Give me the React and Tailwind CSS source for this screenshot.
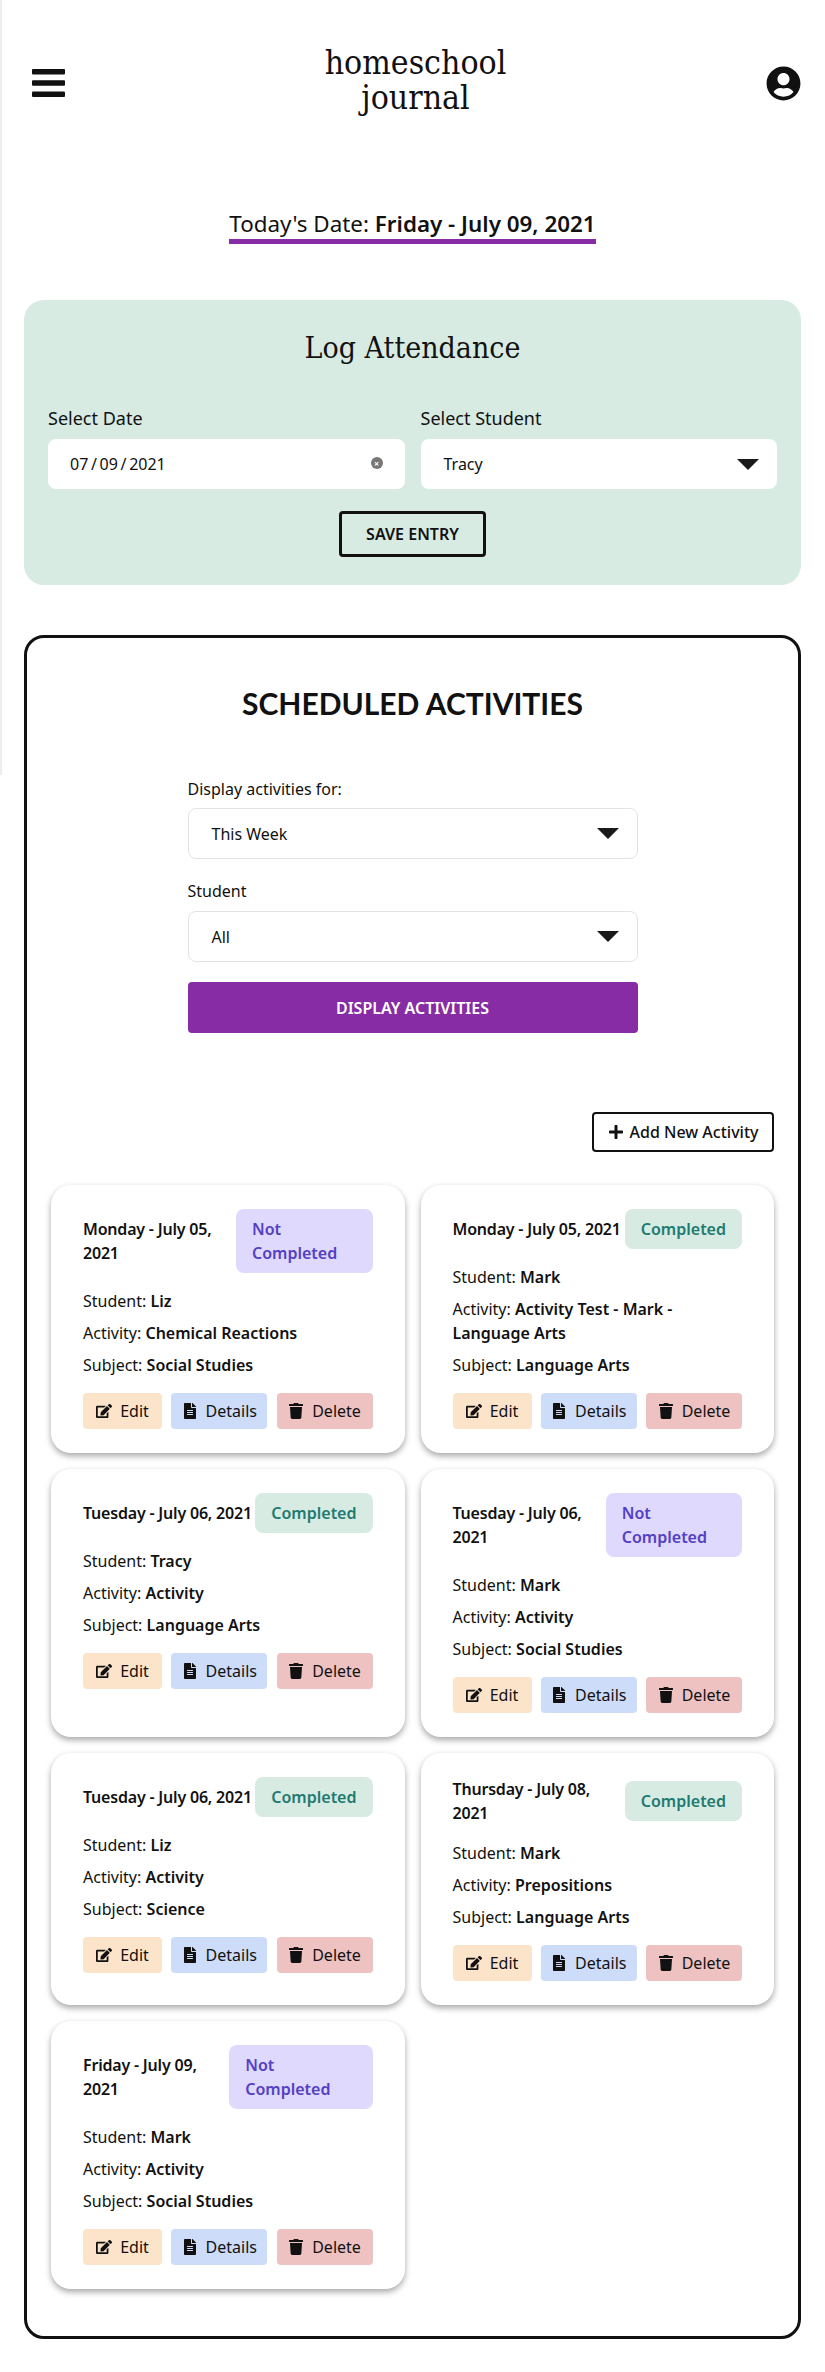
import { FaUserCircle, FaEdit, FaFileAlt, FaTrash, FaPlus } from 'react-icons/fa';

const sans = { fontFamily: '"Noto Sans", sans-serif' };
const slab = { fontFamily: '"DejaVu Serif Condensed", "DejaVu Serif", serif' };

const activities = [
  { date: 'Monday - July 05, 2021', done: false, student: 'Liz', activity: 'Chemical Reactions', subject: 'Social Studies' },
  { date: 'Monday - July 05, 2021', done: true, student: 'Mark', activity: 'Activity Test - Mark - Language Arts', subject: 'Language Arts' },
  { date: 'Tuesday - July 06, 2021', done: true, student: 'Tracy', activity: 'Activity', subject: 'Language Arts' },
  { date: 'Tuesday - July 06, 2021', done: false, student: 'Mark', activity: 'Activity', subject: 'Social Studies' },
  { date: 'Tuesday - July 06, 2021', done: true, student: 'Liz', activity: 'Activity', subject: 'Science' },
  { date: 'Thursday - July 08, 2021', done: true, student: 'Mark', activity: 'Prepositions', subject: 'Language Arts' },
  { date: 'Friday - July 09, 2021', done: false, student: 'Mark', activity: 'Activity', subject: 'Social Studies' },
];

function MenuIcon() {
  return (
    <svg width="33" height="28" viewBox="0 0 33 28" fill="#111">
      <rect y="0" width="33" height="5.5" rx="1" />
      <rect y="11.25" width="33" height="5.5" rx="1" />
      <rect y="22.5" width="33" height="5.5" rx="1" />
    </svg>
  );
}

function Caret() {
  return (
    <svg width="22" height="11" viewBox="0 0 22 11">
      <path d="M0 0h22L11 11z" fill="#1a1a1a" />
    </svg>
  );
}

function FakeSelect({ value, className = '' }) {
  return (
    <div className={`flex items-center justify-between rounded-lg bg-white pl-[23px] pr-[18px] text-base text-[#111] ${className}`}>
      <span>{value}</span>
      <Caret />
    </div>
  );
}

function ActionButton({ icon: Icon, label, className = '' }) {
  return (
    <button className={`flex h-9 items-center justify-center gap-2 rounded text-base text-[#111] ${className}`}>
      <Icon className="h-4 w-auto" />
      {label}
    </button>
  );
}

function ActivityCard({ item }) {
  return (
    <div className="rounded-[20px] bg-white px-8 py-6 shadow-[0_3px_6px_rgba(0,0,0,0.35)]">
      <div className="flex items-center justify-between">
        <p className="text-base font-semibold leading-6 tracking-[-0.2px] text-[#111]">{item.date}</p>
        {item.done ? (
          <span className="rounded-lg bg-[#d7ebe3] px-4 py-2 text-base font-semibold leading-6 text-[#1f7a70]">Completed</span>
        ) : (
          <span className="shrink-[1.3] rounded-lg bg-[#dfd9fd] px-4 py-2 text-base font-semibold leading-6 text-[#5340c4]">Not Completed</span>
        )}
      </div>
      <div className="mt-4 space-y-2 text-base leading-6 text-[#111]">
        <p>Student: <span className="font-semibold">{item.student}</span></p>
        <p>Activity: <span className="font-semibold">{item.activity}</span></p>
        <p>Subject: <span className="font-semibold">{item.subject}</span></p>
      </div>
      <div className="mt-4 flex justify-between">
        <ActionButton icon={FaEdit} label="Edit" className="w-[79px] bg-[#fce4cb]" />
        <ActionButton icon={FaFileAlt} label="Details" className="w-[96px] bg-[#cddcf8]" />
        <ActionButton icon={FaTrash} label="Delete" className="w-[96px] bg-[#eec2c1]" />
      </div>
    </div>
  );
}

export default function App() {
  return (
    <div className="relative h-[2372px] overflow-hidden bg-white px-6 text-[#111]" style={sans}>
      <div className="absolute left-0 top-0 h-[775px] w-[2px] bg-[#eeeeee]" />

      <header className="flex h-[132px] items-center justify-between pl-2 pt-[34px]">
        <MenuIcon />
        <h1 className="mb-[6px] text-center text-[33.5px] leading-[35px] text-[#111]" style={slab}>
          homeschool
          <br />
          journal
        </h1>
        <FaUserCircle size={35} className="text-[#111]" />
      </header>

      <div className="mt-[76px] flex justify-center">
        <p className="border-b-[5px] border-[#872ca5] text-[22.4px] leading-[31px]">
          Today's Date: <span className="font-semibold">Friday - July 09, 2021</span>
        </p>
      </div>

      <section className="mt-[56px] h-[285px] rounded-[20px] bg-[#d7ebe3] px-6 pt-[30px]">
        <h2 className="text-center text-[30px] leading-9" style={slab}>Log Attendance</h2>
        <div className="mt-[40px] grid grid-cols-2 gap-4">
          <div>
            <label className="block text-lg leading-6">Select Date</label>
            <div className="mt-[9px] flex h-[50px] items-center justify-between rounded-lg bg-white px-[22px] text-base">
              <span className="[word-spacing:-1.5px]">07 / 09 / 2021</span>
              <span className="mb-[2px] flex h-3 w-3 items-center justify-center rounded-full bg-[#777] text-[9px] font-bold leading-none text-white">×</span>
            </div>
          </div>
          <div>
            <label className="block text-lg leading-6">Select Student</label>
            <FakeSelect value="Tracy" className="mt-[9px] h-[50px]" />
          </div>
        </div>
        <div className="mt-[22px] flex justify-center">
          <button className="h-[46px] w-[147px] rounded border-[3px] border-[#111] text-base font-semibold">SAVE ENTRY</button>
        </div>
      </section>

      <section className="mt-[50px] h-[1704px] rounded-[20px] border-[3px] border-[#111] px-6">
        <h2 className="mt-[47px] text-center text-[30px] font-bold leading-9" style={{ fontFamily: 'Lato, sans-serif' }}>SCHEDULED ACTIVITIES</h2>

        <div className="mx-auto mt-[56px] w-[450px]">
          <label className="block text-base leading-6">Display activities for:</label>
          <FakeSelect value="This Week" className="mt-[7px] h-[51px] border border-[#e3e3e3]" />
          <label className="mt-[20px] block text-base leading-6">Student</label>
          <FakeSelect value="All" className="mt-[8px] h-[51px] border border-[#e3e3e3]" />
          <button className="mt-[20px] h-[51px] w-full rounded bg-[#872ca5] text-base font-semibold text-white">DISPLAY ACTIVITIES</button>
        </div>

        <div className="mt-[79px] flex justify-end">
          <button className="flex h-10 w-[182px] items-center justify-center gap-[6px] rounded border-2 border-[#111] text-base font-medium">
            <FaPlus size={16} />
            Add New Activity
          </button>
        </div>

        <div className="mt-[33px] grid grid-cols-2 gap-4">
          {activities.map((item, i) => (
            <ActivityCard key={i} item={item} />
          ))}
        </div>
      </section>
    </div>
  );
}
